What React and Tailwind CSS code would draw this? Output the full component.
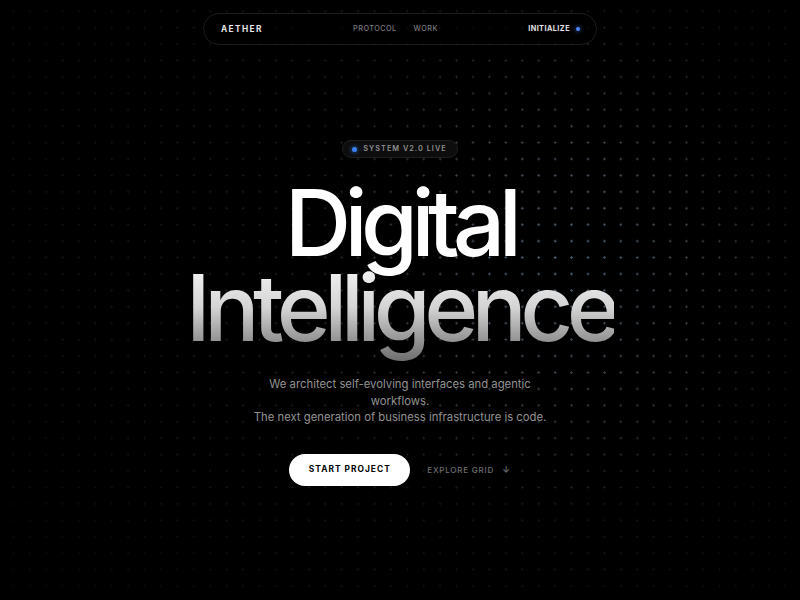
import React from "react";

const font = { fontFamily: "Inter, 'Noto Sans', sans-serif" };

function Nav() {
  return (
    <nav className="mx-auto mt-[13px] flex h-[32px] w-[394px] items-center justify-between rounded-full border border-[#1c1c1c] bg-black/60 pl-[17px] pr-[16px]">
      <span className="text-[8.3px] font-bold tracking-[0.17em] text-[#e5e5e5]">AETHER</span>
      <div className="flex items-center gap-[17px] text-[7.3px] font-medium tracking-[0.06em] text-[#7a7a7a]">
        <span>PROTOCOL</span>
        <span>WORK</span>
      </div>
      <div className="flex items-center gap-[6px]">
        <span className="text-[7.3px] font-bold tracking-[0.06em] text-[#e0e0e0]">INITIALIZE</span>
        <span className="h-[4px] w-[4px] rounded-full bg-[#4f86f7] shadow-[0_0_4px_rgba(79,134,247,0.9)]" />
      </div>
    </nav>
  );
}

export default function App() {
  return (
    <div className="relative h-[600px] w-full overflow-hidden bg-black" style={font}>
      {/* base dot grid */}
      <div className="pointer-events-none absolute inset-0 bg-[radial-gradient(circle,rgba(255,255,255,0.1)_0.9px,transparent_1.3px)] bg-[length:16.43px_16.43px] bg-[position:5px_3px] [mask-image:radial-gradient(ellipse_75%_80%_at_58%_42%,black_30%,rgba(0,0,0,0.3)_100%)]" />
      {/* tinted glow on the grid */}
      <div className="pointer-events-none absolute inset-0 bg-[radial-gradient(circle,rgba(150,190,230,0.45)_0.9px,transparent_1.4px)] bg-[length:16.43px_16.43px] bg-[position:5px_3px] [mask-image:radial-gradient(circle_260px_at_560px_260px,black_0%,transparent_100%)]" />

      <div className="relative flex flex-col items-center">
        <Nav />

        <div className="mt-[95px] flex h-[18px] items-center gap-[6px] rounded-full border border-[#1f1f1f] bg-[#0d0d0d] pl-[9px] pr-[10px]">
          <span className="h-[5px] w-[5px] rounded-full bg-[#3b82f6] shadow-[0_0_5px_rgba(59,130,246,0.9)]" />
          <span className="text-[7.3px] font-semibold tracking-[0.14em] text-[#8f8f8f]">SYSTEM V2.0 LIVE</span>
        </div>

        <h1 className="mt-[23px] text-center text-[92px] font-medium leading-[0.92] tracking-[-0.072em] text-white">
          Digital
          <br />
          <span className="bg-gradient-to-b from-white via-[#d4d4d4] to-[#6b6b6b] bg-clip-text text-transparent">
            Intelligence
          </span>
        </h1>

        <p className="mt-[26px] max-w-[310px] text-center text-[11.3px] leading-[16.5px] text-[#929292]">
          We architect self-evolving interfaces and agentic workflows.
          <br />
          The next generation of business infrastructure is code.
        </p>

        <div className="mt-[28px] flex items-center gap-[17px]">
          <button className="flex h-[32px] w-[121px] items-center justify-center rounded-full bg-white text-[8.4px] font-bold tracking-[0.12em] text-black">
            START PROJECT
          </button>
          <span className="flex items-center gap-[8px] text-[8px] font-medium tracking-[0.1em] text-[#6e6e6e]">
            EXPLORE GRID
            <span className="text-[9px]">↓</span>
          </span>
        </div>
      </div>
    </div>
  );
}
